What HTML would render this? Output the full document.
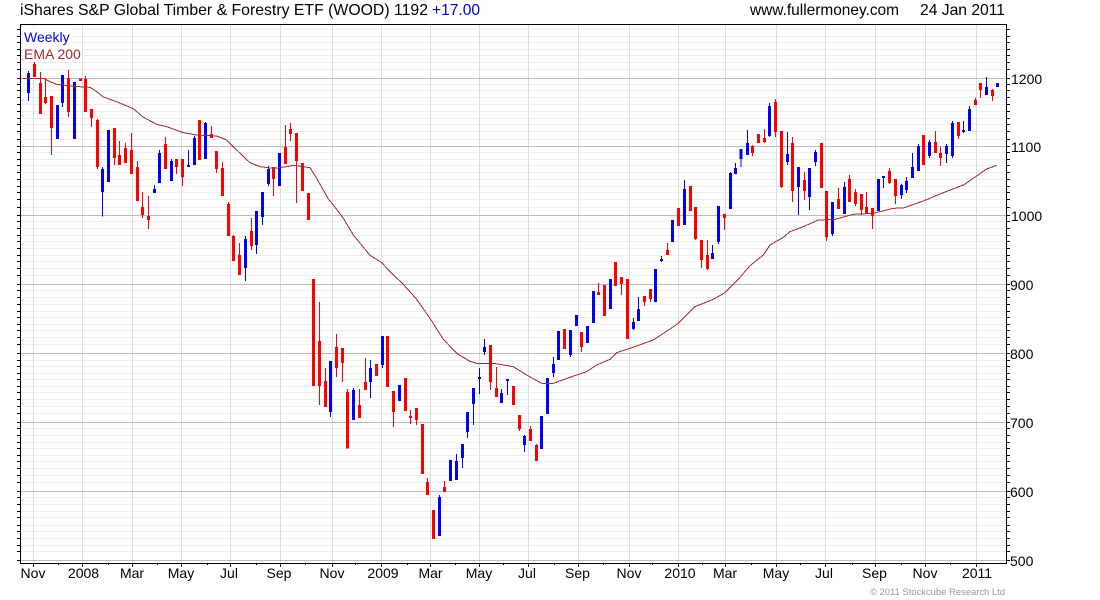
<!DOCTYPE html>
<html><head><meta charset="utf-8"><title>WOOD chart</title>
<style>html,body{margin:0;padding:0;background:#fff}svg{display:block}text{font-family:"Liberation Sans",Arial,sans-serif;font-size:14px;fill:#000}</style>
</head><body>
<svg width="1100" height="600" viewBox="0 0 1100 600" xmlns="http://www.w3.org/2000/svg">
<defs>
<clipPath id="c"><rect x="21" y="25" width="985" height="538"/></clipPath>
<path id="r" d="M17 29.5H1010M17 36.5H1010M17 42.5H1010M17 49.5H1010M17 55.5H1010M17 62.5H1010M17 69.5H1010M17 78.5H1010M17 84.5H1010M17 90.5H1010M17 97.5H1010M17 104.5H1010M17 111.5H1010M17 118.5H1010M17 124.5H1010M17 131.5H1010M17 139.5H1010M17 146.5H1010M17 152.5H1010M17 159.5H1010M17 165.5H1010M17 172.5H1010M17 179.5H1010M17 186.5H1010M17 192.5H1010M17 199.5H1010M17 207.5H1010M17 215.5H1010M17 221.5H1010M17 228.5H1010M17 235.5H1010M17 241.5H1010M17 248.5H1010M17 255.5H1010M17 261.5H1010M17 268.5H1010M17 275.5H1010M17 284.5H1010M17 290.5H1010M17 297.5H1010M17 304.5H1010M17 311.5H1010M17 317.5H1010M17 324.5H1010M17 330.5H1010M17 337.5H1010M17 344.5H1010M17 353.5H1010M17 360.5H1010M17 366.5H1010M17 373.5H1010M17 379.5H1010M17 386.5H1010M17 392.5H1010M17 399.5H1010M17 406.5H1010M17 413.5H1010M17 422.5H1010M17 428.5H1010M17 435.5H1010M17 442.5H1010M17 448.5H1010M17 455.5H1010M17 461.5H1010M17 468.5H1010M17 475.5H1010M17 482.5H1010M17 491.5H1010M17 497.5H1010M17 504.5H1010M17 511.5H1010M17 517.5H1010M17 525.5H1010M17 531.5H1010M17 538.5H1010M17 545.5H1010M17 551.5H1010M17 560.5H1010"/>
</defs>
<g shape-rendering="crispEdges" fill="none" stroke-width="1">
<use href="#r" stroke="#000"/>
<rect x="21" y="25" width="985" height="538" fill="#fff" stroke="none"/>
<g clip-path="url(#c)"><use href="#r" stroke="#eee"/></g>
<path stroke="#ddd" d="M33.5 25V563M82.5 25V563M132.5 25V563M181.5 25V563M230.5 25V563M280.5 25V563M332.5 25V563M381.5 25V563M430.5 25V563M479.5 25V563M528.5 25V563M578.5 25V563M629.5 25V563M678.5 25V563M725.5 25V563M776.5 25V563M825.5 25V563M875.5 25V563M925.5 25V563M976.5 25V563"/>
<path stroke="#bbb" d="M21 78.5H1006M21 146.5H1006M21 215.5H1006M21 284.5H1006M21 353.5H1006M21 422.5H1006M21 491.5H1006M21 560.5H1006"/>
<path stroke="#000" d="M20.5 24V564M1006.5 24V564M20 24.5H1007M20 563.5H1007"/>
<path stroke="#000" d="M33.5 563V567M82.5 563V567M132.5 563V567M181.5 563V567M230.5 563V567M280.5 563V567M332.5 563V567M381.5 563V567M430.5 563V567M479.5 563V567M528.5 563V567M578.5 563V567M629.5 563V567M678.5 563V567M725.5 563V567M776.5 563V567M825.5 563V567M875.5 563V567M925.5 563V567M976.5 563V567M58.5 563V565M108.5 563V565M157.5 563V565M207.5 563V565M256.5 563V565M305.5 563V565M355.5 563V565M407.5 563V565M455.5 563V565M503.5 563V565M554.5 563V565M603.5 563V565M652.5 563V565M702.5 563V565M751.5 563V565M800.5 563V565M852.5 563V565M901.5 563V565M950.5 563V565"/>
<rect x="22" y="27" width="50" height="17" fill="#fff" stroke="none"/>
<rect x="23" y="45" width="59" height="17" fill="#fff" stroke="none"/>
</g>

<g transform="scale(.333333)" fill="none" shape-rendering="crispEdges">
<g transform="translate(.5 0)">
<path stroke="#f00" stroke-width="3" d="M103 186V231M121 216V342M136 234V312M154 288V465M205 210V351M256 228V336M274 327V381M292 357V507M343 384V495M358 423V495M376 429V489M394 399V522M412 483V603M427 576V654M445 588V687M496 411V507M529 477V522M547 477V558M634 378V414M649 453V519M667 486V588M685 606V708M700 705V783M718 729V825M754 654V750M820 501V588M856 375V492M871 369V423M889 399V609M958 906V1215M976 1104V1221M1009 1002V1131M1027 1044V1146M1042 1167V1346M1078 1167V1254M1096 1074V1170M1180 1173V1281M1231 1230V1272M1249 1224V1275M1282 1434V1485M1333 1443V1476M1471 1035V1170M1489 1101V1191M1558 1245V1293M1591 1278V1323M1609 1332V1383M1744 996V1056M1795 849V885M1864 831V885M1933 888V918M1951 867V906M2002 729V765M2086 621V720M2104 720V804M2122 720V810M2173 642V690M2257 435V468M2293 387V429M2326 297V411M2344 393V564M2377 411V606M2413 516V600M2479 573V723M2515 564V627M2548 525V606M2566 567V618M2584 582V645M2599 576V642M2617 624V687M2668 504V552M2686 537V612M2806 393V459M2821 441V498M2875 366V417M2926 294V315M2941 249V294M2977 267V303"/>
<path stroke="#f00" stroke-width="9" d="M103 192V231M121 249V342M136 291V309M154 288V384M205 234V336M241 235V243M256 237V336M274 327V354M292 360V501M343 384V474M358 465V495M376 444V489M394 450V522M412 501V603M427 621V645M445 648V660M496 432V507M529 477V501M547 477V531M598 360V480M634 402V414M649 453V507M667 504V588M685 612V708M700 708V783M718 765V825M754 693V738M820 501V537M856 441V492M871 387V402M889 399V483M907 489V573M925 579V660M940 837V1158M958 1023V1158M976 1143V1221M1009 1041V1104M1027 1044V1089M1042 1176V1346M1078 1215V1254M1096 1146V1170M1129 1092V1128M1162 1008V1161M1180 1173V1236M1216 1134V1233M1231 1248V1254M1249 1224V1260M1267 1272V1422M1282 1446V1485M1300 1530V1617M1333 1461V1476M1471 1035V1146M1489 1164V1191M1540 1158V1215M1558 1245V1287M1591 1287V1323M1609 1335V1383M1693 987V1047M1744 996V1041M1795 876V885M1813 855V948M1846 786V858M1864 831V852M1882 837V1017M1933 888V906M1951 867V897M2002 750V765M2035 624V678M2071 558V633M2086 621V717M2104 720V780M2122 765V807M2173 642V654M2257 438V459M2275 402V429M2293 414V426M2326 306V396M2344 393V561M2377 429V573M2413 540V573M2464 429V564M2479 573V711M2515 597V627M2548 537V606M2566 576V612M2584 582V630M2599 621V642M2617 624V648M2668 513V549M2686 537V588M2770 405V495M2806 426V459M2821 459V474M2875 366V408M2926 300V315M2941 249V270M2977 270V288"/>
<path stroke="#00f" stroke-width="3" d="M85 213V303M187 225V321M307 501V650M463 555V579M478 450V549M514 477V543M565 450V501M583 408V495M616 366V477M736 708V843M769 633V762M787 576V675M805 498V558M991 1083V1251M1060 1164V1260M1111 1080V1194M1147 1008V1104M1318 1485V1608M1369 1362V1440M1387 1332V1404M1402 1236V1314M1420 1164V1275M1438 1104V1182M1453 1017V1065M1504 1167V1209M1522 1137V1185M1573 1305V1356M1660 1071V1131M1711 990V1071M1900 954V990M1915 891V963M1984 768V786M2053 540V675M2137 735V777M2155 618V732M2191 516V627M2206 489V522M2223 447V501M2242 390V465M2308 309V411M2362 396V495M2395 501V645M2428 504V630M2446 450V498M2497 606V708M2533 546V642M2650 528V564M2704 552V597M2719 531V579M2737 459V534M2755 432V513M2788 420V474M2839 432V489M2857 363V474M2890 363V399M2908 318V393M2959 231V285"/>
<path stroke="#00f" stroke-width="9" d="M85 219V279M172 315V417M187 225V309M223 246V417M307 507V576M325 390V546M463 567V579M478 459V549M514 483V543M565 495V501M583 414V495M616 369V477M736 717V804M769 633V735M787 576V651M805 507V552M838 459V558M991 1083V1236M1060 1170V1260M1111 1104V1146M1147 1008V1095M1198 1155V1203M1318 1491V1608M1351 1380V1443M1369 1383V1440M1387 1332V1374M1402 1236V1296M1420 1164V1212M1438 1131V1137M1453 1041V1056M1504 1179V1209M1522 1137V1143M1573 1308V1335M1624 1248V1347M1642 1134V1242M1660 1092V1119M1675 993V1080M1711 990V1065M1729 945V978M1762 978V1029M1780 873V969M1831 837V927M1900 966V987M1915 927V963M1966 807V906M1984 777V783M2017 660V726M2053 567V675M2137 759V777M2155 618V726M2191 519V627M2206 504V522M2223 447V477M2242 429V465M2308 318V408M2362 462V486M2395 501V561M2428 504V591M2446 456V486M2497 606V702M2533 561V642M2635 537V633M2650 528V534M2704 555V585M2719 543V570M2737 501V534M2755 438V513M2788 426V468M2839 438V462M2857 369V468M2890 390V396M2908 327V393M2959 261V285M2992 249V261"/>
</g>
<polyline stroke="#a52a2a" stroke-width="3" points="68,235 130,235 150,245 170,253 220,259 270,262 290,275 310,291 350,305 400,326 430,352 470,373 500,380 550,398 590,405 650,408 680,420 710,450 750,488 780,500 820,505 860,500 880,496 930,503 950,535 985,597 1000,615 1030,655 1060,705 1110,766 1145,788 1170,815 1210,853 1250,898 1290,955 1330,1018 1370,1060 1410,1084 1430,1090 1480,1090 1540,1100 1580,1125 1625,1150 1660,1150 1710,1132 1760,1115 1790,1095 1830,1078 1850,1058 1890,1045 1960,1020 1990,1000 2035,970 2085,920 2140,898 2175,878 2220,832 2250,797 2290,765 2310,735 2350,712 2370,695 2410,680 2455,660 2505,658 2560,643 2620,640 2680,625 2710,624 2770,603 2820,582 2890,555 2930,528 2960,507 2990,496"/>
</g>

<text x="20" y="15" style="font-size:16px" textLength="408" lengthAdjust="spacingAndGlyphs">iShares S&amp;P Global Timber &amp; Forestry ETF (WOOD) 1192</text>
<text x="432" y="15" style="font-size:16px;fill:#0000d0" textLength="48" lengthAdjust="spacingAndGlyphs">+17.00</text>
<text x="750" y="15" style="font-size:16px" textLength="149" lengthAdjust="spacingAndGlyphs">www.fullermoney.com</text>
<text x="920" y="15" style="font-size:16px" textLength="85" lengthAdjust="spacingAndGlyphs">24 Jan 2011</text>
<text x="24" y="42" style="fill:#0000e0">Weekly</text>
<text x="24" y="59" style="fill:#a52a2a">EMA 200</text>
<g text-anchor="middle">
<text x="33" y="578">Nov</text><text x="83.5" y="578">2008</text><text x="132" y="578">Mar</text><text x="181" y="578">May</text><text x="229" y="578">Jul</text><text x="279" y="578">Sep</text><text x="332" y="578">Nov</text><text x="383" y="578">2009</text><text x="430.5" y="578">Mar</text><text x="479" y="578">May</text><text x="527" y="578">Jul</text><text x="577.5" y="578">Sep</text><text x="629" y="578">Nov</text><text x="680" y="578">2010</text><text x="725" y="578">Mar</text><text x="776" y="578">May</text><text x="824" y="578">Jul</text><text x="874.5" y="578">Sep</text><text x="925" y="578">Nov</text><text x="977" y="578">2011</text>
</g>
<text x="1011" y="84">1200</text><text x="1011" y="152">1100</text><text x="1011" y="221">1000</text><text x="1010" y="290">900</text><text x="1010" y="359">800</text><text x="1010" y="428">700</text><text x="1010" y="497">600</text><text x="1010" y="566">500</text>
<text x="870" y="595" style="font-size:9.5px;fill:#999" textLength="135" lengthAdjust="spacing">© 2011 Stockcube Research Ltd</text>
</svg>
</body></html>
